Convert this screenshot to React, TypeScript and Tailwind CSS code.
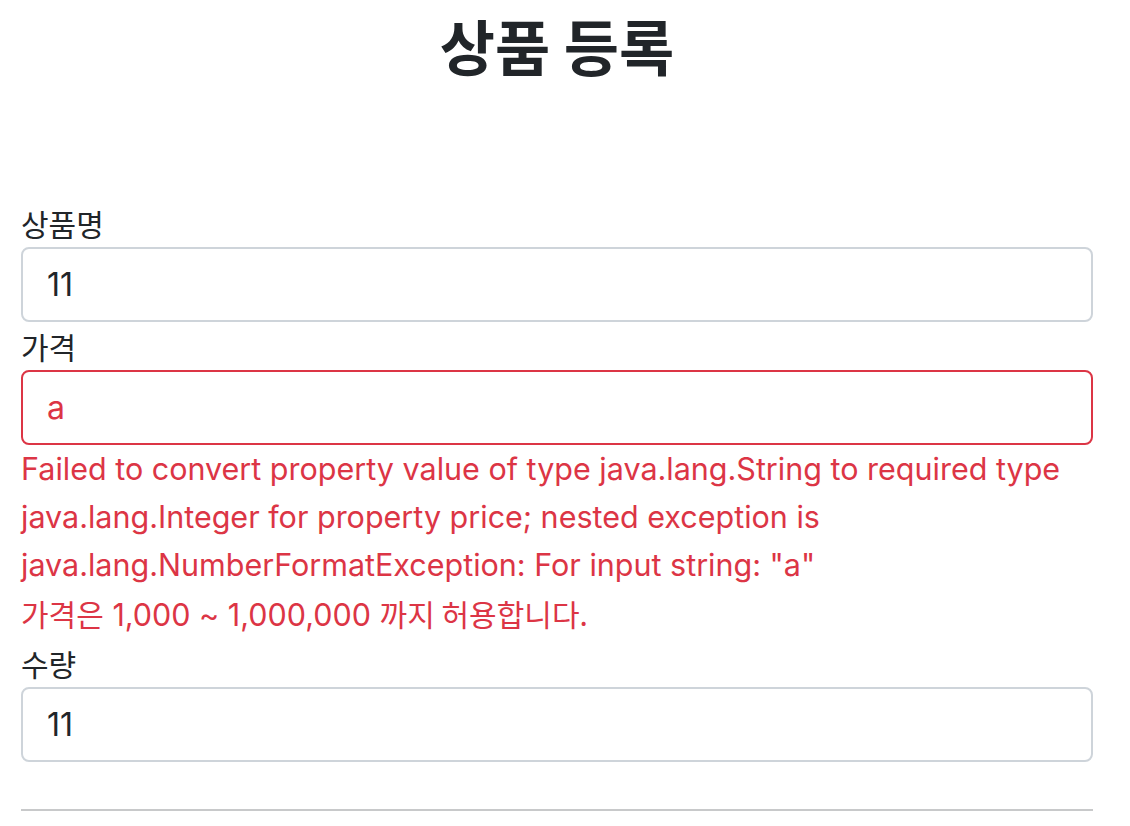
import React from "react";

const KO = "font-['Noto_Sans_CJK_KR',sans-serif]";

export default function App() {
  return (
    <div className="w-[1130px] h-[826px] bg-white overflow-hidden text-[#212529] font-['Inter','Noto_Sans_CJK_KR',sans-serif]">
      <div className="pl-[21px] pr-[37px]">
        <div className="pt-[6px] pb-[116px] text-center">
          <h2 className={`${KO} text-[60px] font-bold leading-[77px]`}>상품 등록</h2>
        </div>
        <form className="flex flex-col">
          <label className={`${KO} text-[30px] leading-[48px]`}>상품명</label>
          <div className="h-[75px] border-2 border-[#ced4da] rounded-[8px] px-[24px] flex items-center text-[32px]">11</div>
          <label className={`${KO} text-[30px] leading-[48px]`}>가격</label>
          <div className="h-[75px] border-2 border-[#dc3545] rounded-[8px] px-[24px] flex items-center text-[32px] text-[#dc3545]">a</div>
          <div className="text-[#dc3545] text-[30.5px] leading-[48px]">
            <div>Failed to convert property value of type java.lang.String to required type java.lang.Integer for property price; nested exception is java.lang.NumberFormatException: For input string: "a"</div>
            <div>
              <span className={`${KO} text-[30px]`}>가격은</span> 1,000 ~ 1,000,000 <span className={`${KO} text-[30px]`}>까지 허용합니다.</span>
            </div>
          </div>
          <label className={`${KO} text-[30px] leading-[48px]`}>수량</label>
          <div className="h-[75px] border-2 border-[#ced4da] rounded-[8px] px-[24px] flex items-center text-[32px]">11</div>
          <hr className="mt-[47px] border-0 border-t-2 border-[#c8c9ca]" />
        </form>
      </div>
    </div>
  );
}
